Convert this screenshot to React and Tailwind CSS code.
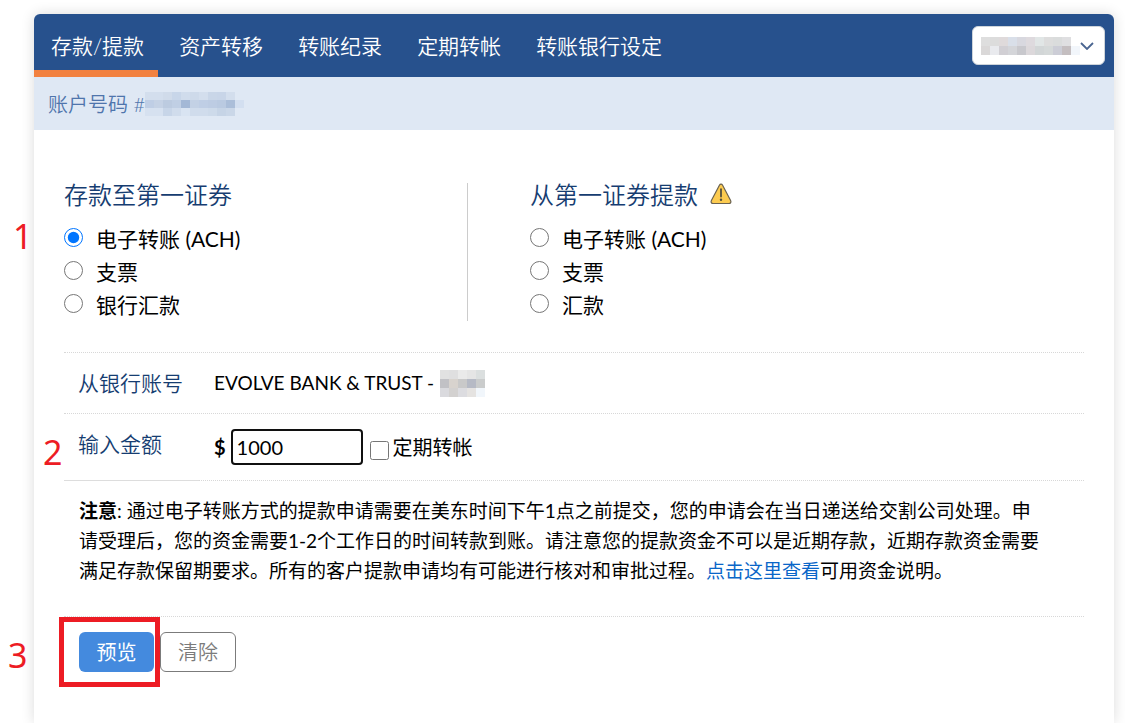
import { useState } from 'react'

const tabs = ['存款/提款', '资产转移', '转账纪录', '定期转帐', '转账银行设定']

const depositMethods = ['电子转账 (ACH)', '支票', '银行汇款']
const withdrawMethods = ['电子转账 (ACH)', '支票', '汇款']

// masked values, one row of cells per line
const accountMask = [
  ['#d3deed', '#d3deed', '#d0dbea', '#c8d6e9', '#d0dcec', '#cedaea', '#d3deed', '#c9d6e8', '#c8d5e8', '#d3deed', '#dfe8f4'],
  ['#bfcee5', '#c5d2e5', '#bccbe0', '#c0cfe4', '#a3b8d6', '#c3d1e5', '#bfcee5', '#bdcce3', '#bacae1', '#abbed9', '#d3dff0'],
  ['#d6e1f0', '#d6e1f0', '#c7d5e8', '#d0dcec', '#d9e4f2', '#d0dcec', '#d0dcec', '#cddaea', '#c6d4e6', '#cad7e8', '#dfe8f4'],
]
const userMask = [
  ['#dedede', '#dcdcdc', '#dfdadb', '#d9dfe9', '#d8d8df', '#dedade', '#e1e6e6', '#dddddd', '#dadcdc', '#dfdfe1', '#ffffff'],
  ['#dad8d8', '#e9eaee', '#d1cfd4', '#d4d5d9', '#c8c8cd', '#dcd8db', '#d2d6d7', '#d5d9d9', '#cccdd6', '#c4bec0', '#f2f6fb'],
]
const bankMask = [
  ['#e1e1e1', '#dfdfe0', '#eaeaea', '#e5e5e5', '#dbdfdf'],
  ['#c1c1c5', '#d8d3ce', '#c9c9c9', '#b6bac5', '#cacccc'],
  ['#dadade', '#d3d1d0', '#dcdce0', '#e5e3e1', '#f1f6fb'],
]

function Mask({ rows, cell }) {
  return (
    <span className="inline-flex flex-col" aria-hidden="true">
      {rows.map((row, i) => (
        <span key={i} className="flex">
          {row.map((color, j) => (
            <span key={j} className={cell} style={{ backgroundColor: color }} />
          ))}
        </span>
      ))}
    </span>
  )
}

function WarningIcon() {
  return (
    <svg width="22" height="22" viewBox="0 0 22 22" aria-hidden="true">
      <path
        d="M9.4 2.2 1.4 17.4C.6 19.1 1.4 20.5 3.2 20.5h15.6c1.8 0 2.6-1.4 1.8-3.1L12.6 2.2c-.8-1.5-2.4-1.5-3.2 0Z"
        fill="#fccb50"
        stroke="#6b6250"
        strokeWidth="1.2"
      />
      <path d="M11 6.2v7.3" stroke="#55503f" strokeWidth="1.8" strokeLinecap="round" />
      <circle cx="11" cy="16.8" r="1.2" fill="#55503f" />
    </svg>
  )
}

function Marker({ className, children }) {
  return (
    <span className={`absolute font-['Noto_Sans'] text-[34px] leading-none text-[#ed1c24] ${className}`}>
      {children}
    </span>
  )
}

function Methods({ group, items, selected, onSelect }) {
  return items.map((item, i) => {
    const value = `${group}-${i}`
    return (
      <label key={value} className="flex h-[33px] items-center gap-[13px] text-[21px]">
        <input
          type="radio"
          name="method"
          className="-mt-0.5 size-[19px]"
          checked={selected === value}
          onChange={() => onSelect(value)}
        />
        {item}
      </label>
    )
  })
}

export default function App() {
  const [method, setMethod] = useState('deposit-0')
  const [amount, setAmount] = useState('1000')
  const [recurring, setRecurring] = useState(false)

  return (
    <div className="flex min-h-screen bg-white pt-3.5 pr-[11px] pl-[34px] font-['Lato','Noto_Sans_CJK_SC',sans-serif] text-black">
      <main className="grow rounded-t-md bg-white shadow-[0_0_14px_rgba(0,0,0,0.14)]">
        <header className="flex h-[63px] items-center justify-between rounded-t-md bg-[#27518d] pr-[9px]">
          <nav className="flex h-full gap-1">
            {tabs.map((tab, i) => (
              <a
                key={tab}
                href="#"
                className={`flex items-center border-b-[7px] pt-2 pr-3.5 pl-[17px] text-[21px] font-[350] text-white ${i === 0 ? 'border-[#f28140]' : 'border-transparent'}`}
              >
                {tab}
              </a>
            ))}
          </nav>
          <div className="relative">
            <select aria-label="账户" className="block h-[39px] w-[133px] appearance-none rounded-md border border-[#ced4da] bg-white">
              <option></option>
            </select>
            <div className="pointer-events-none absolute inset-0 flex items-center pl-[9px]">
              <Mask rows={userMask} cell="h-[9px] w-[9px]" />
              <svg width="14" height="8" viewBox="0 0 14 8" fill="none" stroke="#4a6591" strokeWidth="1.8" aria-hidden="true">
                <path d="m1 1 6 6 6-6" />
              </svg>
            </div>
          </div>
        </header>

        <div className="flex h-[53px] items-center bg-[#dfe8f4] pl-3.5 text-[20px] text-[#4f75ac]">
          <span className="font-[350]">账户号码 #</span>
          <Mask rows={accountMask} cell="h-2 w-[9px]" />
        </div>

        <form className="px-[30px] pt-[53px]" onSubmit={e => e.preventDefault()}>
          <div className="flex">
            <fieldset className="relative w-[404px] border-r border-[#ccc]">
              <h2 className="mb-[15px] text-[24px] leading-6 font-[350] text-[#163d71]">存款至第一证券</h2>
              <Methods group="deposit" items={depositMethods} selected={method} onSelect={setMethod} />
              <Marker className="top-9 -left-[51px]">1</Marker>
            </fieldset>
            <fieldset className="pl-[62px]">
              <h2 className="mb-[15px] flex gap-3 text-[24px] leading-6 font-[350] text-[#163d71]">
                从第一证券提款
                <WarningIcon />
              </h2>
              <Methods group="withdraw" items={withdrawMethods} selected={method} onSelect={setMethod} />
            </fieldset>
          </div>

          <div className="mt-[31px] flex h-[61px] items-center border-t border-dotted border-[#d8d8d8]">
            <span className="w-[135px] pl-3.5 text-[21px] font-[350] text-[#163d71]">从银行账号</span>
            <span className="flex items-center gap-1.5 pl-[15px] text-[19px]">
              EVOLVE BANK &amp; TRUST -
              <Mask rows={bankMask} cell="h-[9px] w-[9px]" />
            </span>
          </div>

          <div className="relative flex h-[67px] border-t border-dotted border-[#d8d8d8]">
            <label htmlFor="amount" className="-mb-px w-[135px] border-b border-[#ddd] pt-3.5 pl-3.5 text-[21px] font-[350] text-[#163d71]">
              输入金额
            </label>
            <div className="flex grow items-center pl-[15px] text-[20px]">
              <b>$</b>
              <input
                id="amount"
                className="ml-[5px] h-9 w-[132px] rounded border-2 border-[#101010] px-1 outline-none"
                value={amount}
                onChange={e => setAmount(e.target.value)}
              />
              <label className="ml-[7px] flex items-center gap-1">
                <input type="checkbox" className="mt-1.5 size-[19px]" checked={recurring} onChange={e => setRecurring(e.target.checked)} />
                定期转帐
              </label>
            </div>
            <Marker className="top-[21px] -left-[21px]">2</Marker>
          </div>

          <p className="border-t border-dotted border-[#d8d8d8] pt-[15px] pr-10 pb-[30px] pl-[15px] text-[19px] leading-[30px]">
            <b>注意</b>: 通过电子转账方式的提款申请需要在美东时间下午1点之前提交，您的申请会在当日递送给交割公司处理。申请受理后，您的资金需要1-2个工作日的时间转款到账。请注意您的提款资金不可以是近期存款，近期存款资金需要满足存款保留期要求。所有的客户提款申请均有可能进行核对和审批过程。
            <a href="#" className="text-[#0a66c8]">点击这里查看</a>可用资金说明。
          </p>

          <div className="relative flex gap-1.5 border-t border-dotted border-[#d8d8d8] pt-[15px] pb-6 pl-[15px] text-[20px]">
            <div className="relative">
              <button type="submit" className="h-10 w-[75px] rounded-md bg-[#448ade] text-white">预览</button>
              <span className="pointer-events-none absolute -inset-x-5 -inset-y-[15px] mr-3.5 border-[5px] border-[#ed1c24]" />
            </div>
            <button type="button" className="h-10 w-[76px] rounded-md border border-[#7b7b7b] font-[350] text-[#7b7b7b]" onClick={() => setAmount('')}>
              清除
            </button>
            <Marker className="top-[21px] -left-14">3</Marker>
          </div>
        </form>
      </main>
    </div>
  )
}
